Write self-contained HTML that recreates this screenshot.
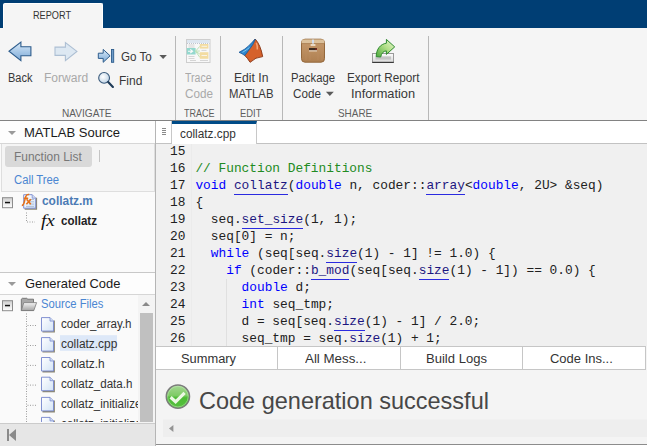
<!DOCTYPE html>
<html><head><meta charset="utf-8">
<style>
*{margin:0;padding:0;box-sizing:border-box}
html,body{width:647px;height:446px;overflow:hidden;background:#f5f5f5;font-family:"Liberation Sans",sans-serif;}
.a{position:absolute}
.t{position:absolute;white-space:nowrap;line-height:1}
#topbar{left:0;top:0;width:647px;height:28px;background:#003e74}
#rtab{left:3px;top:3px;width:100px;height:26px;background:#f5f5f5;border:1px solid #fff;border-bottom:none;border-radius:2px 2px 0 0}
#strip{left:0;top:28px;width:647px;height:93px;background:#f5f5f5;border-bottom:1px solid #828282}
.sep{position:absolute;top:36px;width:1px;height:84px;background:#b8b8b8}
.lbl{font-size:11px;color:#555}
.btn{font-size:12px;color:#222}
.dis{color:#ababab}
/* left panel */
#left{left:0;top:121px;width:155px;height:325px;background:#fafafa}
#lborder{left:155px;top:121px;width:1px;height:325px;background:#b5b5b5}
.hdr{position:absolute;left:0;width:155px;background:#fdfdfd;border-bottom:1px solid #d6d6d6}
.hdr .tri{position:absolute;left:8px;width:0;height:0;border-left:4px solid transparent;border-right:4px solid transparent;border-top:4px solid #9a9a9a}
.hdr span{position:absolute;left:24px;font-size:13px;color:#111;white-space:nowrap;line-height:1}
.minus{position:absolute;left:2px;width:11px;height:11px;border:1px solid #8e8e8e;background:linear-gradient(#fff,#e4e4e4)}
.minus:after{content:"";position:absolute;left:2px;top:4px;width:5px;height:1px;background:#222}
.dotv{position:absolute;width:1px;border-left:1px dotted #9a9a9a}
.doth{position:absolute;height:1px;border-top:1px dotted #9a9a9a}
.fn{font-size:12px;color:#333}
/* doc */
#tabstrip{left:156px;top:121px;width:491px;height:23px;background:#fff;border-bottom:1px solid #c2c2c2}
#code{left:156px;top:144px;width:491px;height:202px;background:#f0f0f0;overflow:hidden}
.ln{position:absolute;font-family:"Liberation Mono",monospace;font-size:12.83px;line-height:17px;white-space:pre;color:#202020}
.k{color:#0000ff}
.c{color:#228b22}
.u{color:#1c1680;border-bottom:1px solid #2a2ae0;padding-bottom:1px}
#btabs{left:156px;top:346px;width:490px;height:24px;background:#fff;border-top:1px solid #c6c6c6;border-bottom:1px solid #c6c6c6}
.bt{position:absolute;top:0;height:22px;border-right:1px solid #c6c6c6;font-size:12.5px;color:#222;text-align:center;line-height:22px}
#summ{left:156px;top:370px;width:491px;height:75px;background:#f4f4f4}
.t{transform-origin:0 0}

</style></head><body>
<div class="a" id="topbar"></div>
<div class="a" id="rtab"></div>
<div class="t" id="report" style="left:33.47px;top:9.90px;font-size:11px;color:#333;transform:scaleX(0.8333)">REPORT</div>
<div class="a" id="strip"></div>
<div class="sep" style="left:175px"></div>
<div class="sep" style="left:220px"></div>
<div class="sep" style="left:282px"></div>
<div class="sep" style="left:428px"></div>
<svg class="a" style="left:0;top:0" width="647" height="121" viewBox="0 0 647 121">
<defs>
<linearGradient id="gb" x1="0" y1="0" x2="0" y2="1"><stop offset="0" stop-color="#dcebf8"/><stop offset="0.5" stop-color="#a9c9e8"/><stop offset="1" stop-color="#7eaad6"/></linearGradient>
<radialGradient id="glens" cx="0.4" cy="0.4" r="0.7"><stop offset="0" stop-color="#ffffff"/><stop offset="1" stop-color="#b8cfe4"/></radialGradient>
<linearGradient id="gbox" x1="0" y1="0" x2="0" y2="1"><stop offset="0" stop-color="#c89c6e"/><stop offset="1" stop-color="#ae7f50"/></linearGradient>
<linearGradient id="gex" x1="1" y1="0" x2="0" y2="1"><stop offset="0" stop-color="#eaf8d4"/><stop offset="0.45" stop-color="#b4e08a"/><stop offset="1" stop-color="#4aa83a"/></linearGradient>
<linearGradient id="gtray" x1="0" y1="0" x2="0" y2="1"><stop offset="0" stop-color="#fdfdfd"/><stop offset="1" stop-color="#d8d8d8"/></linearGradient>
</defs>
<path d="M9 51.2 L20.9 42.1 V46.8 H30.9 V55.7 H20.9 V60.7 Z" fill="url(#gb)" stroke="#2d5c8c" stroke-width="1.1"/>
<path d="M76.9 51.4 L65.4 42.5 V47.1 H55 V55.4 H65.4 V60.7 Z" fill="#dde8f2" stroke="#adbfd3" stroke-width="1.1"/>
<path d="M98.3 53.2 H103.2 V49.4 L110.1 55.8 L103.2 62.3 V58.4 H98.3 Z" fill="url(#gb)" stroke="#2d5c8c" stroke-width="1"/>
<rect x="111.5" y="49.5" width="2.2" height="12.8" fill="#6f9cc9" stroke="#2d5c8c" stroke-width="0.9"/>
<path d="M159.4 55.1 H166.9 L163.15 59.1 Z" fill="#5a5a5a"/>
<circle cx="104.1" cy="77.9" r="5.4" fill="url(#glens)" stroke="#3b5b7c" stroke-width="1.1"/>
<path d="M108.2 82.1 L112.9 86.9" stroke="#1f3b58" stroke-width="2.2" stroke-linecap="round"/>
<g opacity="0.5">
<rect x="186.5" y="39.5" width="23.5" height="23" fill="#fbfbfb" stroke="#a8a8a8"/>
<rect x="187" y="40" width="22.5" height="3" fill="#c6d9ec"/>
<path d="M187 43.5 H209.5" stroke="#6d7f98" stroke-width="0.8" stroke-dasharray="1 1"/>
<path d="M188.5 45h6M188.5 47h6M188.5 56.5h6M188.5 58.5h6M190 60.5h6M200 60.5h8" stroke="#9a9a9a" stroke-width="0.7"/>
<rect x="186.8" y="48" width="8.8" height="6.5" fill="#35bca8"/>
<path d="M188 51.2h4.2 M190.3 49.4 L192.6 51.2 L190.3 53" stroke="#fff" stroke-width="1.1" fill="none"/>
<path d="M195.6 51.2 L199.8 46.3 M195.6 51.2 L199.8 51 M195.6 51.2 L199.8 54 M195.6 51.2 L199.8 57.3" stroke="#86cf78" stroke-width="1"/>
<rect x="199.8" y="44" width="8.6" height="4.6" fill="#f2c550"/>
<rect x="199.8" y="52.2" width="8.6" height="6.6" fill="#f2c550"/>
<path d="M201.5 46.3h5.5M201.5 55.5h5.5" stroke="#fff" stroke-width="0.8"/>
<path d="M201.5 50.4h5" stroke="#9a9a9a" stroke-width="0.7"/>
</g>
<path d="M255.2 39 Q260.5 44.8 262.7 56.6 Q255.5 57 250.1 62.3 Q247.3 57.7 244.8 55.5 Q250 47 255.2 39 Z" fill="#d5612b" stroke="#86300f" stroke-width="0.9" stroke-linejoin="round"/>
<path d="M239 52.3 Q245 49.5 248.3 46.2 Q252 42.5 255.2 39 Q254.5 41.5 252.7 44.8 Q250.5 48 248.3 50.9 Q246.5 53.3 244.8 55.5 Q242 53.5 239 52.3 Z" fill="#2f87cf" stroke="#1d5a99" stroke-width="0.8" stroke-linejoin="round"/>
<path d="M242.5 52.3 Q246 50.5 249.5 47.5" stroke="#79c8f0" stroke-width="1" fill="none"/>
<path d="M256.3 42.8 Q257.6 45.5 257.3 49.5" stroke="#f3a274" stroke-width="1.5" fill="none"/>
<rect x="301.5" y="39.2" width="23" height="23" rx="3.5" fill="url(#gbox)" stroke="#94683c"/>
<path d="M303 39.5 H323 Q324.3 39.8 324.3 43.5 H301.7 Q301.7 39.8 303 39.5 Z" fill="#dcc19c"/>
<path d="M302 43.6 H324" stroke="#a67a4c" stroke-width="0.8"/>
<path d="M306 45v15M310 45v15M318 45v15M322 45v15" stroke="#c09066" stroke-width="0.8" opacity="0.6"/>
<rect x="312" y="39.6" width="2" height="4" fill="#d2dcec"/>
<rect x="310.6" y="44" width="4.8" height="2" fill="#ead9c2"/>
<rect x="309" y="48" width="8" height="2.4" fill="#3c2c22"/>
<rect x="315.5" y="48.5" width="1.2" height="1.2" fill="#c02020"/>
<rect x="309" y="50.4" width="8" height="1" fill="#f2e4d2"/>
<rect x="372.5" y="53.5" width="21" height="9" fill="url(#gtray)" stroke="#9a9a9a"/>
<path d="M372.3 62.4 H393.7" stroke="#3a3a3a" stroke-width="1.2"/>
<rect x="375.5" y="56.4" width="15.6" height="3.2" fill="#c4c4c4"/>
<path d="M376.2 56.6 C376.3 49 380.5 44 386.4 43.2 V39.4 L394.7 46.9 L386.4 54.4 V50.9 C383.4 51 381.4 53.2 380.7 57 Z" fill="url(#gex)" stroke="#2e8a2e" stroke-width="1" stroke-linejoin="round"/>
<path d="M325.9 91.8 H333.8 L329.85 95.9 Z" fill="#5a5a5a"/>
</svg>
<div class="t" id="back" style="left:7.58px;top:71.90px;font-size:12px;color:#383838;transform:scaleX(0.9154)">Back</div>
<div class="t" id="forward" style="left:44.20px;top:71.90px;font-size:12px;color:#a9a9a9;transform:scaleX(1.0048)">Forward</div>
<div class="t" id="goto" style="left:120.50px;top:50.10px;font-size:13px;color:#383838;transform:scaleX(0.8912)">Go To</div>
<div class="t" id="find" style="left:119.08px;top:73.80px;font-size:13px;color:#383838;transform:scaleX(0.9250)">Find</div>
<div class="t" id="navigate" style="left:62.48px;top:108.10px;font-size:11px;color:#5e5e5e;transform:scaleX(0.9189)">NAVIGATE</div>
<div class="t" id="trace1" style="left:185.10px;top:71.90px;font-size:12px;color:#a9a9a9;transform:scaleX(0.8767)">Trace</div>
<div class="t" id="trace2" style="left:184.60px;top:88.00px;font-size:12px;color:#a9a9a9;transform:scaleX(0.9750)">Code</div>
<div class="t" id="tracel" style="left:183.50px;top:107.90px;font-size:11px;color:#5e5e5e;transform:scaleX(0.8216)">TRACE</div>
<div class="t" id="edit1" style="left:234.49px;top:71.90px;font-size:12px;color:#383838;transform:scaleX(1.0125)">Edit In</div>
<div class="t" id="edit2" style="left:229.06px;top:88.00px;font-size:12px;color:#383838;transform:scaleX(0.9435)">MATLAB</div>
<div class="t" id="editl" style="left:240.25px;top:107.90px;font-size:11px;color:#5e5e5e;transform:scaleX(0.8542)">EDIT</div>
<div class="t" id="pkg1" style="left:290.66px;top:72.10px;font-size:12px;color:#383838;transform:scaleX(0.9422)">Package</div>
<div class="t" id="pkg2" style="left:293.00px;top:87.70px;font-size:12px;color:#383838;transform:scaleX(0.9714)">Code</div>
<div class="t" id="exp1" style="left:346.82px;top:72.10px;font-size:12px;color:#383838;transform:scaleX(0.9781)">Export Report</div>
<div class="t" id="exp2" style="left:351.43px;top:88.00px;font-size:12px;color:#383838;transform:scaleX(1.0672)">Information</div>
<div class="t" id="sharel" style="left:338.20px;top:108.30px;font-size:11px;color:#5e5e5e;transform:scaleX(0.9028)">SHARE</div>
<div class="a" id="left"></div>
<div class="hdr" style="top:121px;height:23px"><div class="tri" style="top:10px"></div></div><div class="t" id="msrc" style="left:23.60px;top:126.10px;font-size:13px;color:#1a1a1a;transform:scaleX(1.0021)">MATLAB Source</div>
<div class="a" style="left:1px;top:144px;width:154px;height:48px;background:#f5f5f5;border:1px solid #dedede;border-top:none"></div>
<div class="a" style="left:5px;top:146px;width:87px;height:21px;background:#d9d9d9;border-radius:3px"></div>
<div class="t" id="flist" style="left:14.30px;top:151.10px;font-size:12px;color:#777;transform:scaleX(0.9955)">Function List</div>
<div class="a" style="left:99px;top:150px;width:1px;height:12px;background:#c4c4c4"></div>
<div class="t" id="ctree" style="left:14.36px;top:174.20px;font-size:12px;color:#4a86d2;transform:scaleX(0.9383)">Call Tree</div>
<div class="a" style="left:0;top:0;width:139px;height:422px;overflow:hidden"><svg class="a" style="left:0;top:0" width="155" height="423" viewBox="0 0 155 423"><defs><linearGradient id="gmin" x1="0" y1="0" x2="0" y2="1"><stop offset="0" stop-color="#cfcfcf"/><stop offset="1" stop-color="#ffffff"/></linearGradient><linearGradient id="gpage" x1="0" y1="0" x2="1" y2="1"><stop offset="0" stop-color="#ffffff"/><stop offset="1" stop-color="#d4e4f6"/></linearGradient><linearGradient id="gfold" x1="0" y1="0" x2="0" y2="1"><stop offset="0" stop-color="#f4f4f4"/><stop offset="1" stop-color="#a4a4a4"/></linearGradient></defs><rect x="2.5" y="197.7" width="10" height="10" fill="url(#gmin)" stroke="#8c8c8c"/><rect x="5" y="201.8" width="5" height="1.5" fill="#111"/><path d="M36.4 197.7 H36.4 V209.0 H24.7" stroke="#8d8872" stroke-width="1.4" fill="none"/><path d="M23.7 194.7 H32.2 L35.7 198.2 V208.2 H23.7 Z" fill="url(#gpage)" stroke="#7484cc" stroke-width="0.9"/><path d="M32.2 194.7 V198.2 H35.7" fill="#d0dcf2" stroke="#7484cc" stroke-width="0.7"/><path d="M29 199.5 H34 M29 201.8 H34 M29 204.1 H34 M26 206.4 H34" stroke="#9aaccc" stroke-width="0.7"/><path d="M26.5 212.5 V222 H35" stroke="#9c9c9c" stroke-dasharray="1 1.5" fill="none"/><rect x="2.5" y="300.7" width="10" height="10" fill="url(#gmin)" stroke="#8c8c8c"/><rect x="5" y="304.8" width="5" height="1.5" fill="#111"/><path d="M21.3 310.5 V299.2 L22.3 298.3 H26.8 L27.8 299.2 H33.5 V310.5 Z" fill="#a8a8a8" stroke="#6e6e6e" stroke-width="0.9"/><path d="M21.3 310.6 L23.8 302.6 H36.6 L33.8 310.6 Z" fill="url(#gfold)" stroke="#7a7a7a" stroke-width="0.8"/><path d="M26.5 313.5 V423" stroke="#9c9c9c" stroke-dasharray="1 1.5" fill="none"/><rect x="60" y="335.2" width="57" height="15.6" fill="#dde8f8"/><path d="M27.5 325.5 H36" stroke="#9c9c9c" stroke-dasharray="1 1.5"/><path d="M54.2 320.6 H54.2 V331.9 H42.5" stroke="#8d8872" stroke-width="1.4" fill="none"/><path d="M41.5 317.6 H50.0 L53.5 321.1 V331.1 H41.5 Z" fill="url(#gpage)" stroke="#7484cc" stroke-width="0.9"/><path d="M50.0 317.6 V321.1 H53.5" fill="#d0dcf2" stroke="#7484cc" stroke-width="0.7"/><path d="M27.5 345.5 H36" stroke="#9c9c9c" stroke-dasharray="1 1.5"/><path d="M54.2 340.6 H54.2 V351.9 H42.5" stroke="#8d8872" stroke-width="1.4" fill="none"/><path d="M41.5 337.6 H50.0 L53.5 341.1 V351.1 H41.5 Z" fill="url(#gpage)" stroke="#7484cc" stroke-width="0.9"/><path d="M50.0 337.6 V341.1 H53.5" fill="#d0dcf2" stroke="#7484cc" stroke-width="0.7"/><path d="M27.5 365.4 H36" stroke="#9c9c9c" stroke-dasharray="1 1.5"/><path d="M54.2 360.5 H54.2 V371.8 H42.5" stroke="#8d8872" stroke-width="1.4" fill="none"/><path d="M41.5 357.5 H50.0 L53.5 361.0 V371.0 H41.5 Z" fill="url(#gpage)" stroke="#7484cc" stroke-width="0.9"/><path d="M50.0 357.5 V361.0 H53.5" fill="#d0dcf2" stroke="#7484cc" stroke-width="0.7"/><path d="M27.5 385.1 H36" stroke="#9c9c9c" stroke-dasharray="1 1.5"/><path d="M54.2 380.2 H54.2 V391.5 H42.5" stroke="#8d8872" stroke-width="1.4" fill="none"/><path d="M41.5 377.2 H50.0 L53.5 380.7 V390.7 H41.5 Z" fill="url(#gpage)" stroke="#7484cc" stroke-width="0.9"/><path d="M50.0 377.2 V380.7 H53.5" fill="#d0dcf2" stroke="#7484cc" stroke-width="0.7"/><path d="M27.5 405.3 H36" stroke="#9c9c9c" stroke-dasharray="1 1.5"/><path d="M54.2 400.4 H54.2 V411.7 H42.5" stroke="#8d8872" stroke-width="1.4" fill="none"/><path d="M41.5 397.4 H50.0 L53.5 400.9 V410.9 H41.5 Z" fill="url(#gpage)" stroke="#7484cc" stroke-width="0.9"/><path d="M50.0 397.4 V400.9 H53.5" fill="#d0dcf2" stroke="#7484cc" stroke-width="0.7"/><path d="M27.5 425.3 H36" stroke="#9c9c9c" stroke-dasharray="1 1.5"/><path d="M54.2 420.4 H54.2 V431.7 H42.5" stroke="#8d8872" stroke-width="1.4" fill="none"/><path d="M41.5 417.4 H50.0 L53.5 420.9 V430.9 H41.5 Z" fill="url(#gpage)" stroke="#7484cc" stroke-width="0.9"/><path d="M50.0 417.4 V420.9 H53.5" fill="#d0dcf2" stroke="#7484cc" stroke-width="0.7"/></svg><div class="t" id="r0" style="left:60.60px;top:317.80px;font-size:12px;color:#333;transform:scaleX(0.9644)">coder_array.h</div><div class="t" id="r1" style="left:60.60px;top:337.80px;font-size:12px;color:#333;transform:scaleX(0.9929)">collatz.cpp</div><div class="t" id="r2" style="left:60.60px;top:357.80px;font-size:12px;color:#333;transform:scaleX(0.9907)">collatz.h</div><div class="t" style="left:60.60px;top:377.50px;font-size:12px;color:#333;transform:scaleX(0.9644)">collatz_data.h</div><div class="t" style="left:60.60px;top:397.70px;font-size:12px;color:#333;transform:scaleX(0.9644)">collatz_initialize</div><div class="t" style="left:60.60px;top:417.70px;font-size:12px;color:#333;transform:scaleX(0.9644)">collatz_initialize</div></div>
<div class="t" id="cm" style="left:41.70px;top:194.80px;font-size:12px;font-weight:bold;color:#4c7bb5;transform:scaleX(0.9922)">collatz.m</div>
<div class="t" style="left:41px;top:212.5px;font-family:'Liberation Serif',serif;font-style:italic;font-size:16px;color:#111;transform:scaleX(1.2)">fx</div>
<svg class="a" style="left:0;top:0" width="60" height="230" viewBox="0 0 60 230"><path d="M21.8 205.5 C23.5 205.5 24.2 203 24.8 200 L25.8 196.5 C26.3 194.8 27.3 194.2 29.2 194.6 M23.8 198.3 H28.2" stroke="#e6721a" stroke-width="1.5" fill="none"/><path d="M26.6 199.2 L30.8 204.3 M30.9 199.2 L26.4 204.3" stroke="#e6721a" stroke-width="1.6" fill="none"/></svg>
<div class="t" id="cfn" style="left:61.00px;top:214.80px;font-size:12px;font-weight:bold;color:#222;transform:scaleX(0.9622)">collatz</div>
<div class="a" style="left:0;top:272px;width:155px;height:1px;background:#c8c8c8"></div>
<div class="hdr" style="top:273px;height:22px"><div class="tri" style="top:9px"></div></div><div class="t" id="gcode" style="left:24.80px;top:277.00px;font-size:13px;color:#1a1a1a;transform:scaleX(0.9917)">Generated Code</div>
<div class="t" id="sfiles" style="left:40.86px;top:298.00px;font-size:12px;color:#4a86d2;transform:scaleX(0.9364)">Source Files</div>
<div class="a" style="left:138px;top:295px;width:17px;height:128px;background:#f4f4f4"></div>
<div class="a" style="left:142px;top:302px;width:0;height:0;border-left:4px solid transparent;border-right:4px solid transparent;border-bottom:4px solid #8a8a8a"></div>
<div class="a" style="left:140px;top:313px;width:13px;height:109px;background:#c0c0c0"></div>
<div class="a" style="left:0;top:423px;width:155px;height:23px;background:#e6e6e6;border-top:1px solid #cbcbcb"></div>
<div class="a" style="left:7px;top:429px;width:2px;height:12px;background:#8a8a8a"></div>
<div class="a" style="left:9px;top:429px;width:0;height:0;border-top:6px solid transparent;border-bottom:6px solid transparent;border-right:7px solid #8a8a8a"></div>
<div class="a" id="lborder"></div>
<div class="a" id="tabstrip"></div>
<div class="a" style="left:171px;top:121px;width:1px;height:22px;background:#c8c8c8"></div>
<div class="a" style="left:162px;top:128px;width:4px;height:1px;background:#8a8a8a"></div>
<div class="a" style="left:162px;top:130px;width:4px;height:1px;background:#8a8a8a"></div>
<div class="a" style="left:162px;top:132px;width:4px;height:1px;background:#8a8a8a"></div>
<div class="a" style="left:162px;top:134px;width:4px;height:1px;background:#8a8a8a"></div>
<div class="a" style="left:172px;top:121px;width:85px;height:23px;background:#fff;border-right:1px solid #c8c8c8;border-top:3px solid #004b87"></div>
<div class="t" id="tabcpp" style="left:180.40px;top:127.70px;font-size:12.5px;color:#333;transform:scaleX(0.9441)">collatz.cpp</div>
<div class="a" id="code"><div class="a" style="left:69.5px;top:135px;width:1px;height:67px;background:#e0e0e0"></div><div class="a" style="left:35px;top:0;width:1px;height:202px;background:#ebebeb"></div><div class="ln" style="left:0;top:-1px;width:29.4px;text-align:right">15</div><div class="ln" style="left:39.4px;top:-1px"></div><div class="ln" style="left:0;top:16px;width:29.4px;text-align:right">16</div><div class="ln" style="left:39.4px;top:16px"><span class="c">// Function Definitions</span></div><div class="ln" style="left:0;top:33px;width:29.4px;text-align:right">17</div><div class="ln" style="left:39.4px;top:33px"><span class="k">void</span> <span class="u">collatz</span>(<span class="k">double</span> n, coder::<span class="u">array</span>&lt;<span class="k">double</span>, 2U&gt; &amp;seq)</div><div class="ln" style="left:0;top:50px;width:29.4px;text-align:right">18</div><div class="ln" style="left:39.4px;top:50px">{</div><div class="ln" style="left:0;top:67px;width:29.4px;text-align:right">19</div><div class="ln" style="left:39.4px;top:67px">  seq.<span class="u">set_size</span>(1, 1);</div><div class="ln" style="left:0;top:84px;width:29.4px;text-align:right">20</div><div class="ln" style="left:39.4px;top:84px">  seq[0] = n;</div><div class="ln" style="left:0;top:101px;width:29.4px;text-align:right">21</div><div class="ln" style="left:39.4px;top:101px">  <span class="k">while</span> (seq[seq.<span class="u">size</span>(1) - 1] != 1.0) {</div><div class="ln" style="left:0;top:118px;width:29.4px;text-align:right">22</div><div class="ln" style="left:39.4px;top:118px">    <span class="k">if</span> (coder::<span class="u">b_mod</span>(seq[seq.<span class="u">size</span>(1) - 1]) == 0.0) {</div><div class="ln" style="left:0;top:135px;width:29.4px;text-align:right">23</div><div class="ln" style="left:39.4px;top:135px">      <span class="k">double</span> d;</div><div class="ln" style="left:0;top:152px;width:29.4px;text-align:right">24</div><div class="ln" style="left:39.4px;top:152px">      <span class="k">int</span> seq_tmp;</div><div class="ln" style="left:0;top:169px;width:29.4px;text-align:right">25</div><div class="ln" style="left:39.4px;top:169px">      d = seq[seq.<span class="u">size</span>(1) - 1] / 2.0;</div><div class="ln" style="left:0;top:186px;width:29.4px;text-align:right">26</div><div class="ln" style="left:39.4px;top:186px">      seq_tmp = seq.<span class="u">size</span>(1) + 1;</div><div class="ln" style="left:0;top:203px;width:29.4px;text-align:right">27</div><div class="ln" style="left:39.4px;top:203px">      seq.<span class="u">set_size</span>(1, seq_tmp);</div></div>
<div class="a" id="btabs"><div class="bt" style="left:0;width:122px"></div><div class="bt" style="left:122px;width:123px"></div><div class="bt" style="left:245px;width:122px"></div><div class="bt" style="left:367px;width:123px"></div></div>
<div class="t" id="summary" style="left:181.47px;top:352.80px;font-size:12.5px;color:#333;transform:scaleX(1.0283)">Summary</div><div class="t" id="allmess" style="left:304.70px;top:352.60px;font-size:12.5px;color:#333;transform:scaleX(1.0649)">All Mess...</div><div class="t" id="buildlogs" style="left:426.46px;top:352.80px;font-size:12.5px;color:#333;transform:scaleX(1.0439)">Build Logs</div><div class="t" id="codeins" style="left:550.40px;top:352.60px;font-size:12.5px;color:#333;transform:scaleX(1.0383)">Code Ins...</div>
<div class="a" id="summ"></div>
<svg class="a" style="left:156px;top:370px" width="491" height="76" viewBox="156 370 491 76">
<defs><linearGradient id="gck" x1="0" y1="0" x2="0" y2="1"><stop offset="0" stop-color="#a6d894"/><stop offset="0.45" stop-color="#7fcb66"/><stop offset="0.55" stop-color="#4cbb34"/><stop offset="1" stop-color="#58c040"/></linearGradient></defs>
<circle cx="177.9" cy="396.6" r="11.6" fill="url(#gck)" stroke="#7c7c7c" stroke-width="1.5"/>
<circle cx="177.9" cy="396.6" r="10.3" fill="none" stroke="#c8e8c0" stroke-width="0.7" opacity="0.7"/>
<path d="M170.6 397.3 L175.6 401.8 L184.6 392.8" stroke="#ecf8e4" stroke-width="3.2" fill="none" stroke-linejoin="miter"/>
<rect x="163" y="419.5" width="484" height="17.5" fill="#eeeeee"/>
<path d="M169 428.5 L173.4 425 V432 Z" fill="#939393"/>
<rect x="156" y="444" width="491" height="1" fill="#8c8c8c"/>
<rect x="156" y="445" width="491" height="1" fill="#ffffff"/>
</svg>
<div class="t" id="codegen" style="left:199.22px;top:389.00px;font-size:24px;color:#474747;transform:scaleX(0.9789)">Code generation successful</div>
</body></html>
